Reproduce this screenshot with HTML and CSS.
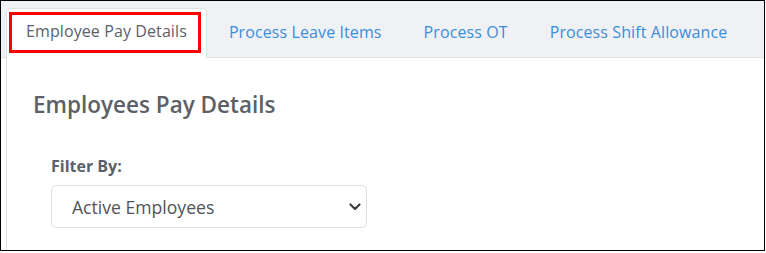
FILE: index.html
```html
<!DOCTYPE html>
<html>
<head>
<meta charset="utf-8">
<link rel="stylesheet" href="styles.css">
</head>
<body>
<div class="frame">
  <nav class="tabs">
    <div class="tab active">Employee Pay Details<span class="mark"></span></div>
    <a class="tab">Process Leave Items</a>
    <a class="tab">Process OT</a>
    <a class="tab">Process Shift Allowance</a>
  </nav>
  <section class="panel">
    <h2 class="title">Employees Pay Details</h2>
    <div class="field">
      <label class="label">Filter By:</label>
      <div class="select">
        <span>Active Employees</span>
        <svg class="chev" width="12" height="8" viewBox="0 0 12 8"><path d="M1.5 1.5 L6 6 L10.5 1.5" fill="none" stroke="#3d3d3d" stroke-width="2.2" stroke-linecap="round" stroke-linejoin="round"/></svg>
      </div>
    </div>
  </section>
</div>
</body>
</html>
```
FILE: styles.css
```css
* { box-sizing: border-box; }
html, body { margin: 0; padding: 0; background: #fff; }
body { font-family: "Open Sans", "Noto Sans", sans-serif; }
.frame {
  width: 765px;
  height: 251px;
  border: 1px solid #000;
  background: #fff;
  display: flex;
  flex-direction: column;
  overflow: hidden;
}
.tabs {
  display: flex;
  align-items: flex-end;
  background: #f0f1f5;
  padding: 7px 0 0 5px;
  border-bottom: 1px solid #dee2e6;
  height: 57px;
}
.tab {
  position: relative;
  display: block;
  height: 49px;
  padding: 10px 19px 0 19px;
  margin-right: 2px;
  margin-bottom: -1px;
  font-size: 16px;
  line-height: 24px;
  color: #3b8ed8;
  border: 1px solid transparent;
  border-bottom: none;
  border-radius: 5px 5px 0 0;
  white-space: nowrap;
  letter-spacing: 0.1px;
}
.tab.active {
  background: #fff;
  color: #5d6167;
  border-color: #dee2e6;
  height: 50px;
}
.mark {
  position: absolute;
  left: 2px;
  top: 3px;
  width: 192px;
  height: 41px;
  border: 3px solid #ff0000;
}
.panel {
  flex: 1;
  margin-left: 5px;
  border-left: 1px solid #dee2e6;
  padding: 31px 26px 0 26px;
}
.title {
  margin: 0;
  font-size: 22.5px;
  line-height: 32px;
  font-weight: 600;
  color: #5d6167;
}
.field {
  margin-top: 34px;
  padding-left: 18px;
}
.label {
  display: block;
  font-size: 16px;
  font-weight: 700;
  line-height: 22px;
  color: #5d6167;
}
.select {
  margin-top: 8px;
  width: 316px;
  height: 43px;
  border: 1px solid #dcdfe3;
  border-radius: 5px;
  display: flex;
  align-items: center;
  justify-content: space-between;
  padding: 0 4px 0 20px;
  font-size: 17.6px;
  color: #4f5358;
}
.chev { margin-right: 1px; }
```
